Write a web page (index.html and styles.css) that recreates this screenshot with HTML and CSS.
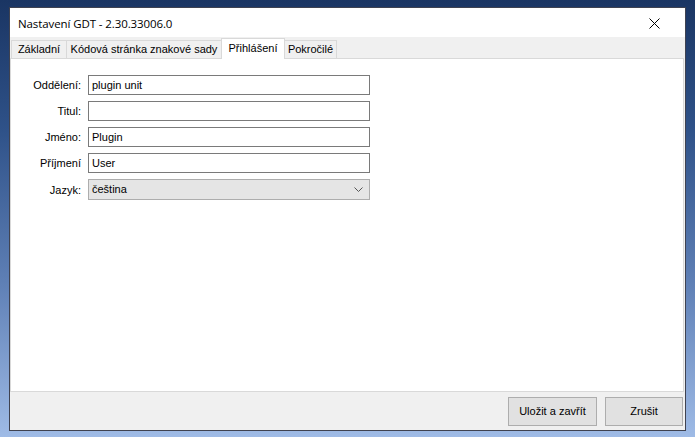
FILE: index.html
```html
<!DOCTYPE html>
<html lang="cs">
<head>
<meta charset="utf-8">
<title>Nastavení GDT</title>
<link rel="stylesheet" href="styles.css">
</head>
<body>
<div class="window">
  <div class="titlebar">
    <span class="title">Nastavení GDT - 2.30.33006.0</span>
    <svg class="close" width="11" height="11" viewBox="0 0 11 11"><path d="M0.5 0.5L10.5 10.5M10.5 0.5L0.5 10.5" stroke="#000" stroke-width="1" fill="none"/></svg>
  </div>
  <div class="tabs">
    <div class="tab t1">Základní</div>
    <div class="tab t2">Kódová stránka znakové sady</div>
    <div class="tab t3 active">Přihlášení</div>
    <div class="tab t4">Pokročilé</div>
  </div>
  <div class="panel">
    <div class="form">
      <label>Oddělení:</label><div class="input">plugin unit</div>
      <label>Titul:</label><div class="input"></div>
      <label>Jméno:</label><div class="input">Plugin</div>
      <label>Příjmení</label><div class="input">User</div>
      <label>Jazyk:</label>
      <div class="combo"><span>čeština</span>
        <svg width="9" height="5" viewBox="0 0 9 5"><path d="M0.5 0.5L4.5 4.5L8.5 0.5" stroke="#555" stroke-width="1" fill="none"/></svg>
      </div>
    </div>
  </div>
  <div class="footer">
    <button class="btn save">Uložit a zavřít</button>
    <button class="btn cancel">Zrušit</button>
  </div>
</div>
</body>
</html>
```
FILE: styles.css
```css
html, body { margin: 0; padding: 0; }
body {
  width: 695px;
  height: 437px;
  overflow: hidden;
  background: linear-gradient(180deg, #1a3563 0%, #2f5289 30%, #5f80b6 65%, #9fbbe6 100%);
  padding: 7px 0 0 9px;
  box-sizing: border-box;
  font-family: "Liberation Sans", Arial, sans-serif;
  font-size: 11px;
  color: #000;
}
.window {
  box-sizing: border-box;
  width: 677px;
  height: 424px;
  border: 1px solid #3f4250;
  background: #f0f0f0;
  display: flex;
  flex-direction: column;
}
.titlebar {
  height: 29px;
  background: #fff;
  display: flex;
  align-items: center;
  justify-content: space-between;
  padding: 0 25px 0 8px;
  flex-shrink: 0;
}
.title {
  font-family: "Open Sans", "Liberation Sans", sans-serif;
  font-size: 11.5px;
  color: #000;
  letter-spacing: -0.1px;
  padding-top: 1px;
}
.close { margin-top: 1px; }
.tabs {
  display: flex;
  align-items: flex-end;
  height: 21px;
  padding-left: 1px;
  flex-shrink: 0;
}
.tab {
  height: 18px;
  box-sizing: border-box;
  border: 1px solid #d9d9d9;
  border-bottom: none;
  background: #f0f0f0;
  text-align: center;
  line-height: 17px;
  margin-right: -1px;
  white-space: nowrap;
}
.t1 { width: 56px; }
.t2 { width: 156px; }
.t3 { width: 64px; }
.t4 { width: 53px; }
.tab.active {
  height: 21px;
  background: #fff;
  line-height: 18px;
  position: relative;
  z-index: 1;
  margin-bottom: -1px;
}
.panel {
  flex: 1;
  background: #fff;
  border: 1px solid #d9d9d9;
  margin-right: 1px;
  padding-top: 16px;
}
.form {
  display: grid;
  grid-template-columns: 70px 282px;
  column-gap: 7px;
  row-gap: 6px;
  align-items: center;
}
.form label {
  text-align: right;
  color: #000;
}
.input, .combo {
  box-sizing: border-box;
  height: 20px;
  border: 1px solid #7a7a7a;
  padding: 0 3px;
  line-height: 18px;
  background: #fff;
}
.combo {
  background: #e5e5e5;
  border-color: #adadad;
  height: 21px;
  line-height: 19px;
  display: flex;
  justify-content: space-between;
  align-items: center;
  padding-right: 6px;
}
.footer {
  height: 38px;
  display: flex;
  justify-content: flex-end;
  align-items: center;
  gap: 8px;
  padding-right: 2px;
  flex-shrink: 0;
}
.btn {
  height: 29px;
  box-sizing: border-box;
  background: #e1e1e1;
  border: 1px solid #adadad;
  font-family: "Liberation Sans", Arial, sans-serif;
  font-size: 11px;
  color: #000;
  padding: 0;
}
.save { width: 89px; }
.cancel { width: 78px; }
```
